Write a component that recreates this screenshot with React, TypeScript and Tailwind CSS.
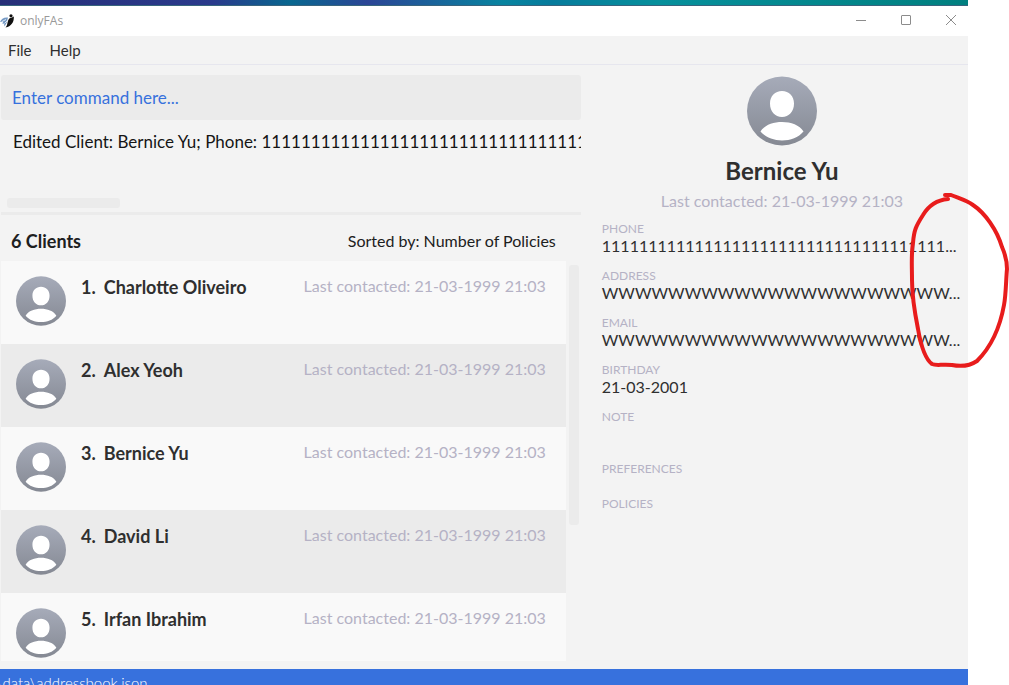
import React, { useId } from "react";

const clients = ["Charlotte Oliveiro", "Alex Yeoh", "Bernice Yu", "David Li", "Irfan Ibrahim"];
const lastContacted = "Last contacted: 21-03-1999 21:03";

const details = [
  { label: "PHONE", value: "1".repeat(37) + "..." },
  { label: "ADDRESS", value: "W".repeat(21) + "..." },
  { label: "EMAIL", value: "W".repeat(21) + "..." },
  { label: "BIRTHDAY", value: "21-03-2001" },
];

function Avatar({ className }: { className: string }) {
  const id = useId();
  return (
    <svg viewBox="0 0 70 70" className={className} aria-hidden="true">
      <defs>
        <linearGradient id={id} x1="0" y1="0" x2="0" y2="1">
          <stop offset="0" stopColor="#a6abb9" />
          <stop offset="1" stopColor="#858993" />
        </linearGradient>
      </defs>
      <ellipse cx="35" cy="35" rx="35" ry="34.500" fill={`url(#${id})`} />
      <path
        fill="#fff"
        d="M35 15c7 0 12 5 12 12.500c0 8-5 13.500-12 13.500s-12-5.500-12-13.500c0-7.500 5-12.500 12-12.500zM13.500 55.500c4-6.500 12.500-9.500 21.500-9.500s17.500 3 21.500 9.500c-5 6-13 9-21.500 9s-16.500-3-21.500-9z"
      />
    </svg>
  );
}

function Logo() {
  return (
    <svg viewBox="0 0 14 14" className="h-[14px] w-[14px] shrink-0" aria-hidden="true">
      <circle cx="11" cy="1.800" r="1.600" fill="#111" />
      <path d="M13.800 2.500c.4 5-2 10-8.300 11c2-2 1.500-4 2.500-6.500c.5-2 1.500-3.500 3-3z" fill="#111" />
      <path d="M0 8c1-3 4-5 8-4.500L6.500 9l-2 3.500L4 9.500L2.500 10L3 7.500z" fill="#7599c4" />
      <path d="M2 7.500l4-2M4.500 9.500L7 7" stroke="#dce8f5" strokeWidth="1" />
    </svg>
  );
}

export default function App() {
  return (
    <div className="relative h-screen overflow-hidden bg-white pr-[41px] font-['Lato',sans-serif] text-[#2f2f2f]">
      <div className="flex h-full flex-col bg-[#f3f3f3]">
        <div className="h-[6px] shrink-0 border-b border-[#38647d] bg-[linear-gradient(to_right,#262f78,#2a3a8c_22%,#08678f_30%,#2b4596_38%,#0784a0_52%,#067b9c_57%,#06909c_68%,#007f7f)]" />

        <header className="flex h-[30px] shrink-0 items-center bg-white">
          <Logo />
          <h1 className="ml-[6px] grow font-['Open_Sans',sans-serif] text-[12px] text-[#999]">onlyFAs</h1>
          <div className="mr-[-6px] flex h-[28px] self-start text-[#8c8c8c]">
            <button aria-label="Minimize" className="flex w-[45px] items-center justify-center">
              <svg viewBox="0 0 10 10" className="h-[10px] w-[10px]" stroke="currentColor"><path d="M0 5.500h10" /></svg>
            </button>
            <button aria-label="Maximize" className="flex w-[45px] items-center justify-center">
              <svg viewBox="0 0 10 10" className="h-[10px] w-[10px]" fill="none" stroke="currentColor"><rect x=".5" y=".5" width="9" height="9" rx=".5" /></svg>
            </button>
            <button aria-label="Close" className="flex w-[46px] items-center justify-center">
              <svg viewBox="0 0 10 10" className="h-[10px] w-[10px]" stroke="currentColor"><path d="M0 0l10 10M10 0L0 10" /></svg>
            </button>
          </div>
        </header>

        <nav className="flex h-[29px] shrink-0 items-center gap-[18px] border-b border-[#e6e6ee] px-2 text-[15px]">
          <button>File</button>
          <button>Help</button>
        </nav>

        <div className="flex min-h-0 grow">
          <main className="flex w-3/5 flex-col pl-px pt-[10px]">
            <input
              aria-label="Command"
              placeholder="Enter command here..."
              className="h-[45px] w-full shrink-0 rounded-[3px] bg-[#ebebeb] px-[11px] text-[17px] outline-none placeholder:text-[#3771dd]"
            />
            <section className="flex h-[95px] shrink-0 flex-col justify-between border-b-3 border-[#ebebeb] pb-1 pt-[10px]">
              <p className="overflow-hidden whitespace-nowrap pl-3 text-[17px] leading-6 text-[#151515]">
                Edited Client: Bernice Yu; Phone: {"1".repeat(40)}
              </p>
              <div className="ml-[6px] h-[10px] w-[113px] rounded-[3px] bg-[#ebebeb]" />
            </section>

            <div className="flex h-[46px] shrink-0 items-center justify-between pl-[10px] pr-[25px] pt-[6px]">
              <h2 className="text-[18px] font-bold text-[#1c2020]">6 Clients</h2>
              <p className="text-[16px] text-[#1c2020]">Sorted by: Number of Policies</p>
            </div>

            <div className="mb-2 flex min-h-0 grow gap-[3px]">
              <ul className="grow overflow-hidden">
                {clients.map((name, i) => (
                  <li key={name} className="flex h-[83px] items-start bg-[#f9f9f9] pl-[15px] pr-5 pt-[15px] even:bg-[#ebebeb]">
                    <Avatar className="h-[50px] w-[50px] shrink-0" />
                    <h3 className="ml-[15px] grow text-[18px] font-bold leading-[22px]">
                      <span className="mr-2">{i + 1}.</span>
                      {name}
                    </h3>
                    <p className="text-[16px] leading-5 text-[#b5b2c5]">{lastContacted}</p>
                  </li>
                ))}
              </ul>
              <div className="mr-[2px] mt-1 h-[260px] w-[10px] shrink-0 rounded-[3px] bg-[#ebebeb]" />
            </div>
          </main>

          <aside className="min-w-0 grow pl-[21px] pr-[6px] pt-[11px]">
            <div className="flex flex-col items-center">
              <Avatar className="h-[70px] w-[70px]" />
              <h2 className="mt-[9px] text-[24px] font-bold leading-8">Bernice Yu</h2>
              <p className="mt-1 text-[16px] leading-5 text-[#b5b2c5]">{lastContacted}</p>
            </div>
            <dl className="mt-[10px]">
              {details.map(({ label, value }) => (
                <div key={label} className="h-[47px]">
                  <dt className="text-[12px] leading-4 text-[#b5b2c5]">{label}</dt>
                  <dd className="whitespace-nowrap text-[16px] leading-[18px]">{value}</dd>
                </div>
              ))}
              <dt className="text-[12px] leading-4 text-[#b5b2c5]">NOTE</dt>
              <dt className="mt-9 text-[12px] leading-4 text-[#b5b2c5]">PREFERENCES</dt>
              <dt className="mt-[19px] text-[12px] leading-4 text-[#b5b2c5]">POLICIES</dt>
            </dl>
          </aside>
        </div>

        <footer className="h-[16px] shrink-0 overflow-hidden bg-[#3771dd] pt-1 text-[15px] font-light leading-5 text-white">
          <p className="-ml-1">\data\addressbook.json</p>
        </footer>
      </div>

      <svg
        viewBox="0 0 104 180"
        className="pointer-events-none absolute right-0 top-[192px] h-[180px] w-[104px]"
        fill="none"
        stroke="#e81c1c"
        strokeWidth="4"
        strokeLinecap="round"
        strokeLinejoin="round"
        aria-hidden="true"
      >
        <path d="M43 7C32 8 24 13 18 23C11 34 9 38 8 51C6 62 7 74 7 88C7 106 10 122 13 137C16 154 20 167 27 172C31 174 37 172 47 173C57 175 66 173 72 169C83 158 94 141 99 113C101 103 101 87 102 77C102 70 101 64 97 55C92 38 80 21 68 13C61 8 53 6 46 3L40 3" />
      </svg>
    </div>
  );
}
